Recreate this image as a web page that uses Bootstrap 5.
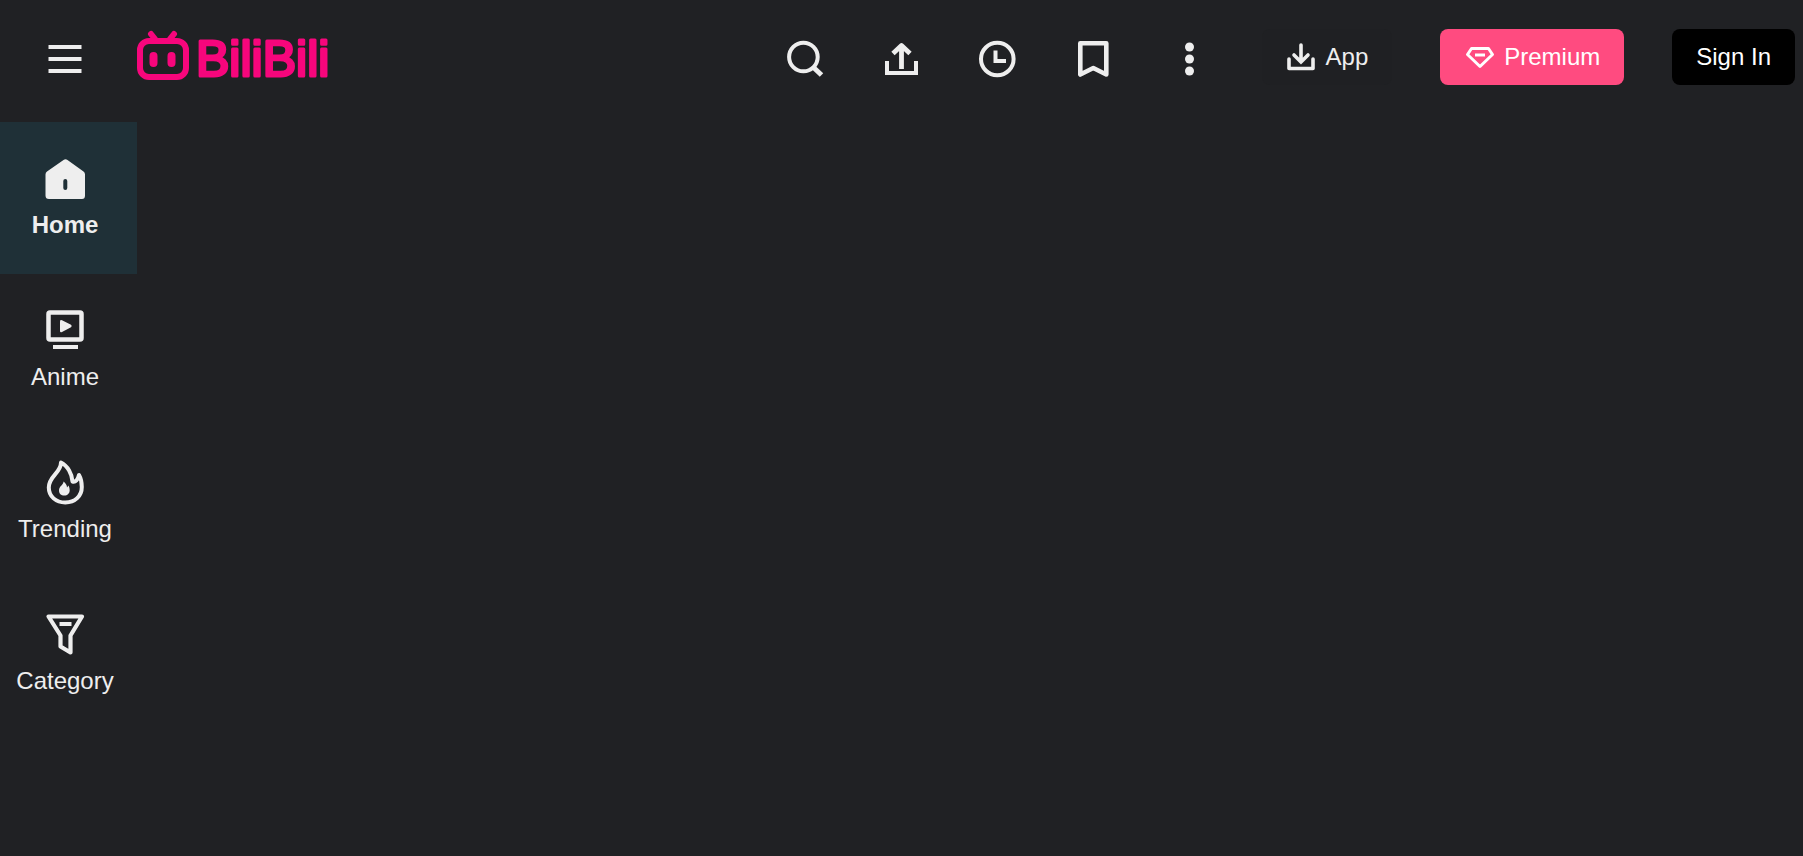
<!DOCTYPE html>
<html lang="en">
<head>
<meta charset="utf-8">
<meta name="viewport" content="width=device-width, initial-scale=1">
<title>BiliBili</title>
<link rel="stylesheet" href="https://cdn.jsdelivr.net/npm/bootstrap@5.3.0/dist/css/bootstrap.min.css">
<style>
  body { background: #202124; color: #eee; font-family: "Liberation Sans", Arial, sans-serif; font-size: 24px; line-height: 32px; }
  .topbar { height: 122px; padding: 0 8px 8px 41px; }
  .glyph { width: 48px; height: 48px; display: block; fill: none; stroke: currentColor; stroke-width: 4; flex: none; }
  .glyph-sm { width: 32px; height: 32px; display: block; fill: none; stroke: currentColor; stroke-width: 4; flex: none; }
  .solid { fill: currentColor; stroke: none; }
  .icon-btn { color: #eee; margin-top: 4px; }
  .gap-bar { gap: 48px; }
  .pill { height: 56px; padding: 0 24px; border: 0; border-radius: 8px; font-size: 24px; line-height: 32px; color: #fff; white-space: nowrap; }
  .pill:hover { color: #fff; }
  .pill-app { background: #1f2023; color: #eee; }
  .pill-premium { background: #ff4b80; }
  .pill-sign { background: #000; }
  .brand, .brand:hover { color: #f7067c; }
  .brand-mark { width: 192px; height: 48px; display: block; overflow: visible; margin-bottom: 2px; fill: none; stroke: currentColor; stroke-width: 6; stroke-linecap: round; stroke-linejoin: round; }
  .brand-mark text { fill: currentColor; stroke-width: 3; font-size: 50px; }
  .side { width: 137px; }
  .side-item { height: 152px; padding: 0 7px 2px 0; gap: 7px; color: #eee; }
  .side-item:hover { color: #eee; }
  .side-item.current { background: #1f3037; font-weight: 700; }
</style>
</head>
<body>
<header class="topbar d-flex align-items-center justify-content-between">
  <div class="d-flex align-items-center gap-bar">
    <button type="button" class="btn p-0 border-0 icon-btn" aria-label="Menu">
      <svg class="glyph" viewBox="0 0 48 48"><path d="M7.500 12h33M7.500 24h33M7.500 36h33"/></svg>
    </button>
    <a href="#" class="brand text-decoration-none">
      <svg class="brand-mark" viewBox="0 0 192 48"><path d="M14 2l4 5M37 2l-4 5"/><rect x="3" y="9" width="46" height="36" rx="9"/><path d="M16.500 24v7M34.500 24v7" stroke-width="8"/><text x="59" y="44">BiliBili</text></svg>
    </a>
  </div>
  <div class="d-flex align-items-center gap-bar">
    <button type="button" class="btn p-0 border-0 icon-btn" aria-label="Search">
      <svg class="glyph" viewBox="1 0 48 48"><circle cx="22.400" cy="22" r="14.300"/><path d="M32 32l8.500 8" stroke-width="5"/></svg>
    </button>
    <button type="button" class="btn p-0 border-0 icon-btn" aria-label="Upload">
      <svg class="glyph" viewBox="1 0 48 48"><path d="M10 26v12h29V26"/><path d="M24.500 34V11M16 18.500l8.500-8 8.500 8" stroke-width="4.800" stroke-linejoin="round" /></svg>
    </button>
    <button type="button" class="btn p-0 border-0 icon-btn" aria-label="History">
      <svg class="glyph" viewBox="1 0 48 48"><circle cx="24.300" cy="24" r="16.300"/><path d="M22.500 15.500V26H33"/></svg>
    </button>
    <button type="button" class="btn p-0 border-0 icon-btn" aria-label="Bookmarks">
      <svg class="glyph" viewBox="1 0 48 48"><path d="M11.300 8.300h26v31.200l-13-6.500-13 6.500z" stroke-linejoin="round" stroke-width="4.600"/></svg>
    </button>
    <button type="button" class="btn p-0 border-0 icon-btn" aria-label="More">
      <svg class="glyph solid" viewBox="1 0 48 48"><circle cx="24.500" cy="12" r="4.500"/><circle cx="24.500" cy="24" r="4.500"/><circle cx="24.500" cy="36" r="4.500"/></svg>
    </button>
    <button type="button" class="btn pill pill-app d-flex align-items-center gap-2">
      <svg class="glyph-sm" viewBox="1 0 32 32"><path d="M4 18v9.500h24V18" stroke-linecap="round" stroke-linejoin="round" stroke-width="3.600"/><path d="M16 4v17M9 14l7 7 7-7" stroke-linecap="round" stroke-width="3.600"/></svg>
      App
    </button>
    <button type="button" class="btn pill pill-premium d-flex align-items-center gap-2">
      <svg class="glyph-sm" viewBox="1 0 32 32"><path d="M8.500 7.500h17l4 6L17 25.500 4.500 13.500z" stroke-linejoin="round" stroke-width="3"/><path d="M12 14h10" stroke-width="3"/></svg>
      Premium
    </button>
    <button type="button" class="btn pill pill-sign">Sign In</button>
  </div>
</header>
<nav class="side nav flex-column flex-nowrap" aria-label="Main">
  <a href="#" class="side-item current nav-link d-flex flex-column align-items-center justify-content-center" aria-current="page">
    <svg class="glyph solid" viewBox="0 -1 48 48"><path fill-rule="evenodd" d="M26.500 5l16 11.500Q44 17.500 44 19.500V40.500Q44 44 41 44H8Q4.500 44 4.500 40.500V19.500Q4.500 17.500 6 16.500L22.500 5Q24.500 3.500 26.500 5zM22.300 26v7a2 2 0 0 0 4 0v-7a2 2 0 0 0-4 0z"/></svg>
    <span>Home</span>
  </a>
  <a href="#" class="side-item nav-link d-flex flex-column align-items-center justify-content-center">
    <svg class="glyph" viewBox="0 0 48 48"><rect x="7.500" y="6.500" width="33" height="27" rx="1.500" stroke-width="4.500"/><path d="M12 41h25"/><path class="solid" d="M19 15.500q0-2 2-1.300l9 4.600q1.500 1.200 0 2.400L21 26q-2 .7-2-1z"/></svg>
    <span>Anime</span>
  </a>
  <a href="#" class="side-item nav-link d-flex flex-column align-items-center justify-content-center">
    <svg class="glyph" viewBox="0 0 48 48"><path d="M20 4.500C20 15 7.800 18 7.800 29.500C7.800 38.500 15 44.500 24.300 44.500C34 44.500 40.800 38 40.800 29C40.800 24.500 40 20.500 38 17C37 21.500 34.500 24.500 31.500 23.500C31 16 26.500 7.500 20 4.500z" stroke-linejoin="round"/><path class="solid" d="M22.500 23.500C22.500 27 18 28 18 32.500C18 35.500 20 37.500 23.300 37.500C26.500 37.500 28.700 35.300 28.700 32.200C28.700 30.500 28.200 29 27.500 27.500L26 29.500C26 27 24.500 25 22.500 23.500z"/></svg>
    <span>Trending</span>
  </a>
  <a href="#" class="side-item nav-link d-flex flex-column align-items-center justify-content-center">
    <svg class="glyph" viewBox="0 0 48 48"><path d="M7.500 6.500h33.500L29.500 25.500V42.500L19.500 36.500V25.500z" stroke-linejoin="round" stroke-width="4.200"/><path d="M18.500 14h12"/></svg>
    <span>Category</span>
  </a>
</nav>
<script src="https://cdn.jsdelivr.net/npm/bootstrap@5.3.0/dist/js/bootstrap.bundle.min.js"></script>
</body>
</html>
